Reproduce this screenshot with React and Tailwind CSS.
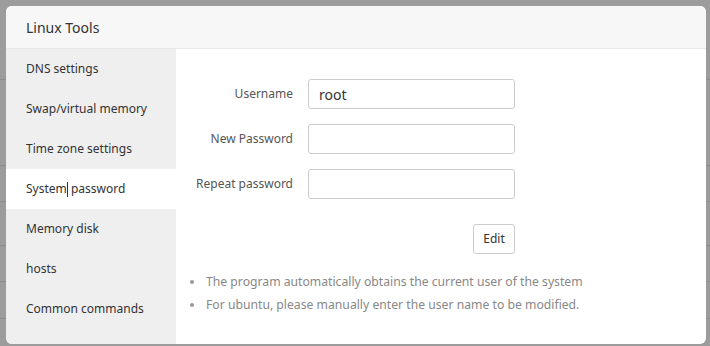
import React from 'react';

const menu = [
  'DNS settings',
  'Swap/virtual memory',
  'Time zone settings',
  'System password',
  'Memory disk',
  'hosts',
  'Common commands',
];

const fields = [
  { label: 'Username', value: 'root' },
  { label: 'New Password', value: '' },
  { label: 'Repeat password', value: '' },
];

const App = () => {
  return (
    <div className="relative w-[710px] h-[346px] overflow-hidden bg-[#9c9c9c] font-['Noto_Sans',sans-serif]">
      {/* page behind the overlay */}
      <div className="flex flex-col pt-[40px]">
        {[40, 86, 36, 44, 36, 37, 40].map((h, i) => (
          <div key={i} style={{ height: h }} className="border-b border-[#8e8e8e]" />
        ))}
      </div>

      {/* dialog */}
      <div className="absolute left-[6px] top-[6px] w-[700px] h-[338px] rounded-[6px] bg-white overflow-hidden flex flex-col">
        <header className="h-[43px] shrink-0 flex items-center px-[20px] bg-[#f7f7f7] border-b border-[#e9e9e9] text-[14px] text-[#333]">
          Linux Tools
        </header>
        <div className="flex flex-1">
          <nav className="w-[170px] bg-[#efefef] flex flex-col">
            {menu.map((item, i) => (
              <div
                key={item}
                className={`h-[40px] flex items-center pl-[20px] text-[12px] text-[#333] ${i === 3 ? 'bg-white' : ''}`}
              >
                {i === 3 ? (
                  <span>
                    System<span className="inline-block w-px h-[15px] bg-[#333] align-middle" /> password
                  </span>
                ) : (
                  item
                )}
              </div>
            ))}
          </nav>
          <main className="flex-1 pt-[30px]">
            <div className="flex flex-col gap-[15px] w-[339px]">
              {fields.map((f) => (
                <div key={f.label} className="flex items-center gap-[15px]">
                  <label className="w-[117px] text-right text-[12px] text-[#555]">{f.label}</label>
                  <input
                    readOnly
                    value={f.value}
                    className="w-[207px] h-[30px] border border-[#ccc] rounded-[3px] px-[10px] text-[14px] text-[#333] outline-none"
                  />
                </div>
              ))}
            </div>
            <div className="w-[339px] flex justify-end mt-[25px]">
              <button className="w-[42px] h-[30px] border border-[#ccc] rounded-[3px] bg-white text-[12px] text-[#333]">
                Edit
              </button>
            </div>
            <ul className="mt-[16px] pl-[14px] text-[12.2px] text-[#888] leading-[23px]">
              <li className="flex items-center">
                <span className="w-[4px] h-[4px] rounded-full bg-[#999] mr-[12px]" />
                The program automatically obtains the current user of the system
              </li>
              <li className="flex items-center">
                <span className="w-[4px] h-[4px] rounded-full bg-[#999] mr-[12px]" />
                For ubuntu, please manually enter the user name to be modified.
              </li>
            </ul>
          </main>
        </div>
      </div>
    </div>
  );
};

export default App;
